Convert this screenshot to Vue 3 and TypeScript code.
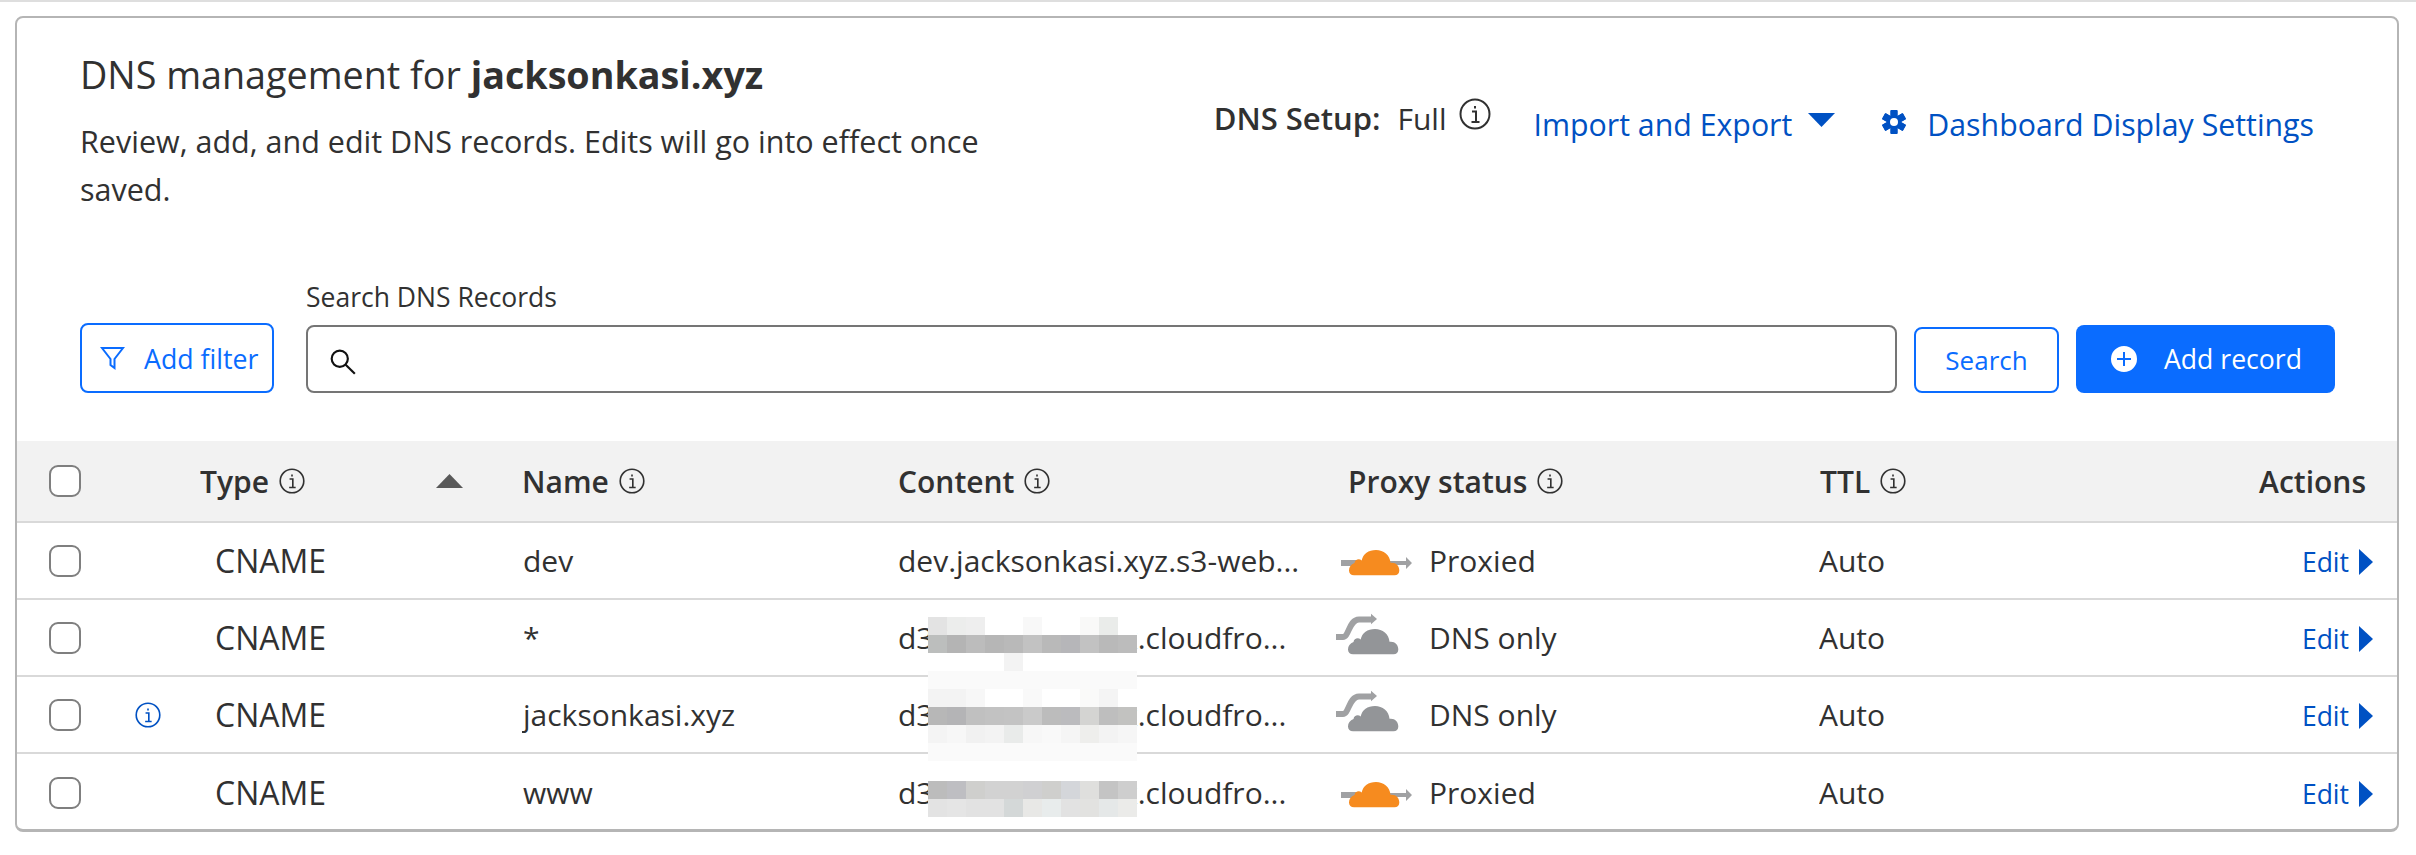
<script setup lang="ts">
interface DnsRecord {
  name: string
  content: string
  proxied: boolean
  warn: boolean
}

const records: DnsRecord[] = [
  { name: 'dev', content: 'dev.jacksonkasi.xyz.s3-web...', proxied: true, warn: false },
  { name: '*', content: 'd3xxxxxxxxxxxxx.cloudfro...', proxied: false, warn: false },
  { name: 'jacksonkasi.xyz', content: 'd3xxxxxxxxxxxxx.cloudfro...', proxied: false, warn: true },
  { name: 'www', content: 'd3xxxxxxxxxxxxx.cloudfro...', proxied: true, warn: false },
]

const columns = [
  { label: 'Type', info: true, sort: true, cls: '' },
  { label: 'Name', info: true, sort: false, cls: '' },
  { label: 'Content', info: true, sort: false, cls: '' },
  { label: 'Proxy status', info: true, sort: false, cls: 'th-proxy' },
  { label: 'TTL', info: true, sort: false, cls: 'th-ttl' },
]

const w = 'ffffff'
const fa = 'fafafa'
const mosaicA: string[][] = [
  ['e3e3e3', 'ecedec', 'eeeeee', w, w, 'f8f8f8', w, w, 'f9f9f8', 'eaecea', w],
  ['bcbebd', 'b4b4b4', 'bcbcbc', 'b6b6b6', 'b9b9b9', 'c2c2c2', 'b9b9b9', 'b6b6b9', 'c2c2c2', 'b9b9b9', 'bcbcbc'],
  [w, w, w, w, 'f3f3f3', w, w, w, w, w, w],
  [fa, fa, fa, fa, fa, fa, fa, fa, fa, fa, fa],
  ['f3f3f3', 'f3f3f3', 'f7f7f7', w, w, 'f9f9f9', w, w, 'fafaf9', 'f4f4f4', w],
  ['b7b7b7', 'b4b4b6', 'c0c0c0', 'c2c2c2', 'c3c3c3', 'cacaca', 'bcbcbc', 'bbbbbe', 'd4d4d2', 'bebebe', 'c2c2c0'],
  ['f4f4f4', 'f7f7f7', 'f1f1f1', 'f3f3f3', 'e9ebea', 'f7f7f7', 'f9f9f9', 'f5f5f5', 'eeeeec', 'f3f3f3', 'f6f6f6'],
  [fa, fa, fa, fa, fa, fa, fa, fa, fa, fa, fa],
]
const mosaicB: string[][] = [
  ['bcbcbc', 'bebec2', 'cfcfcd', 'd2d2d2', 'd2d2d2', 'd0d0d2', 'cfcfcd', 'd4d6da', 'dfdfdd', 'c4c4c4', 'cecece'],
  ['e3e3e3', 'e5e5e5', 'e2e2e2', 'e2e2e2', 'd4d8d8', 'e8e8e6', 'e8ecec', 'e2e2e2', 'e2e2e0', 'e5e8e8', 'ebebe9'],
]
const cloud =
  'M20 39.3H60.5C63.5 39.3 65.3 37.5 65.3 34.5C65.3 29.5 61.5 26 56.5 26.8C56 19 49.5 14 42 14C34.5 14 29 18 27.7 24.5C25.5 22.5 21 23 20.5 27C17 28.5 15 31 15 34.5C15 37.5 17 39.3 20 39.3Z'
const teeth = [0, 60, 120, 180, 240, 300]
</script>

<template>
  <div class="page">
    <section class="card">
      <header class="head">
        <div class="intro">
          <h1 class="title">DNS management for <strong>jacksonkasi.xyz</strong></h1>
          <p class="desc">Review, add, and edit DNS records. Edits will go into effect once saved.</p>
        </div>
        <div class="tools">
          <div class="setup">
            <b>DNS Setup:</b>
            <span class="full">Full</span>
            <svg class="info lg" viewBox="0 0 32 32" aria-hidden="true">
              <circle cx="16" cy="16" r="14.5" />
              <path d="M13 13.5h4v10M12.5 24h8M16 8v2.5" />
            </svg>
          </div>
          <a class="link import">Import and Export
            <svg class="caret" viewBox="0 0 27 14" aria-hidden="true"><path d="M0 0H27L13.5 14Z" /></svg>
          </a>
          <a class="link settings">
            <svg class="gear" viewBox="0 0 24 24" aria-hidden="true">
              <rect v-for="t in teeth" :key="t" x="8.5" y="0" width="7" height="24" rx="1" :transform="`rotate(${t} 12 12)`" />
              <circle class="gear-hole" cx="12" cy="12" r="4" />
            </svg>
            Dashboard Display Settings
          </a>
        </div>
      </header>

      <div class="searchbar">
        <button class="btn filter" type="button">
          <svg class="funnel" viewBox="0 0 24 24" aria-hidden="true"><path d="M1.5 2H22.5L14 13V22L10 19V13Z" /></svg>
          Add filter
        </button>
        <label class="field">
          <span class="field-label">Search DNS Records</span>
          <span class="input">
            <svg class="lens" viewBox="0 0 26 26" aria-hidden="true"><circle cx="10" cy="10" r="7.5" /><path d="M15.5 15.5L24 24" /></svg>
          </span>
        </label>
        <button class="btn search" type="button">Search</button>
        <button class="btn add" type="button">
          <svg class="plus" viewBox="0 0 28 28" aria-hidden="true"><circle cx="14" cy="14" r="14" /><path d="M14 7V21M7 14H21" /></svg>
          Add record
        </button>
      </div>

      <div class="table-wrap">
        <table class="table">
          <colgroup>
            <col class="c-check" /><col class="c-warn" /><col class="c-type" /><col class="c-name" />
            <col class="c-content" /><col class="c-proxy" /><col class="c-ttl" /><col class="c-actions" />
          </colgroup>
          <thead>
            <tr>
              <th><span class="box"></span></th>
              <th></th>
              <th v-for="c in columns" :key="c.label" :class="c.cls">
                <span class="th-in">
                  {{ c.label }}
                  <svg class="info" viewBox="0 0 32 32" aria-hidden="true">
                    <circle cx="16" cy="16" r="14.5" />
                    <path d="M13 13.5h4v10M12.5 24h8M16 8v2.5" />
                  </svg>
                  <svg v-if="c.sort" class="sort" viewBox="0 0 27 14" aria-hidden="true"><path d="M13.5 0L27 14H0Z" /></svg>
                </span>
              </th>
              <th class="right">Actions</th>
            </tr>
          </thead>
          <tbody>
            <tr v-for="r in records" :key="r.name">
              <td><span class="box"></span></td>
              <td>
                <svg v-if="r.warn" class="info warn" viewBox="0 0 32 32" aria-hidden="true">
                  <circle cx="16" cy="16" r="14.5" />
                  <path d="M13 13.5h4v10M12.5 24h8M16 8v2.5" />
                </svg>
              </td>
              <td class="t-type">CNAME</td>
              <td class="t-name">{{ r.name }}</td>
              <td class="t-content">{{ r.content }}</td>
              <td>
                <span class="status">
                  <svg class="proxy" viewBox="0 0 84 50" aria-hidden="true">
                    <template v-if="r.proxied">
                      <path class="arrow-fill" d="M7 24H22V30H7ZM52 25H72V21L78 27L72 33V29H52Z" />
                      <path class="cloud-on" :d="cloud" />
                    </template>
                    <template v-else>
                      <path class="arrow-line" d="M2 24H9C15 24 15 6.5 25 6.5H38" />
                      <path class="arrow-fill" d="M37 0.7L43 6L37 11.3Z" />
                      <path class="cloud-off" :d="cloud" transform="translate(-1 2)" />
                    </template>
                  </svg>
                  {{ r.proxied ? 'Proxied' : 'DNS only' }}
                </span>
              </td>
              <td class="t-ttl">Auto</td>
              <td class="right">
                <a class="edit">Edit
                  <svg class="edit-caret" viewBox="0 0 14 26" aria-hidden="true"><path d="M0 0L14 13L0 26Z" /></svg>
                </a>
              </td>
            </tr>
          </tbody>
        </table>
        <div class="mosaic m-a" aria-hidden="true">
          <template v-for="(row, i) in mosaicA" :key="i">
            <i v-for="(cell, j) in row" :key="j" :style="{ background: '#' + cell }"></i>
          </template>
        </div>
        <div class="mosaic m-b" aria-hidden="true">
          <template v-for="(row, i) in mosaicB" :key="i">
            <i v-for="(cell, j) in row" :key="j" :style="{ background: '#' + cell }"></i>
          </template>
        </div>
      </div>
    </section>
  </div>
</template>

<style scoped>
.page {
  box-sizing: border-box;
  height: 855px;
  border-top: 2px solid #dedede;
  padding: 14px 17px 0 15px;
  background: #fff;
  color: #313131;
  font-family: "Open Sans", "Noto Sans", sans-serif;
  font-size: 30px;
  overflow: hidden;
}
.card {
  box-sizing: border-box;
  height: 816px;
  border: 2px solid #b5b5b5;
  border-bottom-width: 3px;
  border-radius: 8px;
  overflow: hidden;
}
.head {
  display: flex;
  justify-content: space-between;
  align-items: flex-start;
  height: 299px;
}
.intro {
  width: 980px;
  padding: 33px 0 0 63px;
}
.title {
  margin: 0;
  font-size: 37.7px;
  font-weight: 400;
  line-height: 48px;
}
.title strong { font-weight: 700; }
.desc {
  margin: 18px 0 0;
  width: 915px;
  font-size: 30.5px;
  line-height: 48px;
}
.tools {
  display: flex;
  align-items: flex-start;
  padding: 78px 83px 0 0;
}
.setup {
  display: flex;
  align-items: center;
  height: 40px;
  margin-top: 2px;
}
.setup b { font-weight: 600; font-size: 31px; }
.full { margin-left: 17px; }
.setup .lg { margin: -8px 0 0 12px; }
.link {
  display: flex;
  align-items: center;
  color: #0051c3;
  height: 40px;
  margin-top: 8px;
  white-space: nowrap;
  font-size: 30.3px;
}
.import { margin-left: 43px; }
.caret { width: 27px; height: 14px; margin: -8px 0 0 16px; fill: #0051c3; }
.settings { margin-left: 47px; }
.gear { width: 24px; height: 24px; margin: -4px 21px 0 0; fill: #0051c3; }
.gear-hole { fill: #fff; }
.searchbar {
  display: flex;
  align-items: flex-end;
  padding: 0 62px 0 63px;
  height: 76px;
}
.btn {
  box-sizing: border-box;
  display: flex;
  align-items: center;
  font: inherit;
  border-radius: 8px;
  border: 2px solid #0a6cff;
  background: #fff;
  color: #0a6cff;
  white-space: nowrap;
}
.filter {
  width: 194px;
  height: 70px;
  padding: 0 0 0 18px;
  font-size: 26.7px;
}
.funnel { width: 25px; height: 24px; margin-right: 19px; fill: none; stroke: #0a6cff; stroke-width: 2; }
.field { display: flex; flex-direction: column; margin-left: 32px; flex: 1; }
.field-label { font-size: 26.5px; line-height: 34px; margin-bottom: 11px; }
.input {
  box-sizing: border-box;
  display: flex;
  align-items: center;
  height: 68px;
  border: 2px solid #757575;
  border-radius: 8px;
  padding-left: 21px;
}
.lens { width: 28px; height: 28px; margin-top: 5px; fill: none; stroke: #111; stroke-width: 2; }
.search {
  justify-content: center;
  width: 145px;
  height: 66px;
  margin: 0 0 0 17px;
  padding: 0;
  font-size: 26px;
}
.add {
  width: 259px;
  height: 68px;
  margin: 0 0 0 17px;
  padding: 0 0 0 34px;
  background: #0a6cff;
  color: #fff;
  font-size: 26.6px;
  border: 0;
}
.plus { width: 28px; height: 28px; margin-right: 26px; fill: #fff; stroke: #0a6cff; stroke-width: 2; }
.table-wrap {
  position: relative;
  margin-top: 48px;
}
.table {
  width: 100%;
  table-layout: fixed;
  border-collapse: separate;
  border-spacing: 0;
}
.c-check { width: 118px; }
.c-warn { width: 65px; }
.c-type { width: 322px; }
.c-name { width: 376px; }
.c-content { width: 436px; }
.c-proxy { width: 485px; }
.c-ttl { width: 431px; }
th, td {
  padding: 0;
  text-align: left;
  border-bottom: 2px solid #d9d9d9;
  white-space: nowrap;
  overflow: hidden;
}
thead tr { height: 82px; }
tbody tr { height: 77px; }
th {
  background: #f2f2f2;
  font-weight: 600;
  font-size: 30px;
}
th:first-child, td:first-child { padding-left: 32px; }
tbody tr:last-child td { border-bottom: 0; }
.box {
  box-sizing: border-box;
  display: block;
  width: 32px;
  height: 32px;
  border: 2px solid #7f7f7f;
  border-radius: 9px;
  background: #fff;
}
.th-in { display: flex; align-items: center; }
.th-proxy { padding-left: 14px; }
.th-ttl { padding-left: 1px; }
.info {
  width: 26px;
  height: 26px;
  margin-left: 10px;
  fill: none;
  stroke: #313131;
  stroke-width: 2;
  flex: none;
}
.lg { width: 32px; height: 32px; }
.warn { display: block; margin: 0; stroke: #0051c3; }
.sort { width: 27px; height: 14px; margin-left: 131px; fill: #595959; }
.t-type { padding-left: 15px; font-size: 32px; }
.t-name { padding-left: 1px; }
.t-content { padding-left: 0; }
.status { display: flex; align-items: center; }
.proxy { width: 84px; height: 50px; margin-right: 11px; flex: none; }
.cloud-on { fill: #f68b1f; }
.cloud-off { fill: #939598; }
.arrow-fill { fill: #a0a1a3; }
.arrow-line { fill: none; stroke: #a0a1a3; stroke-width: 6; }
.t-ttl { padding-left: 0; }
.right { text-align: right; padding-right: 31px; }
td.right { padding-right: 24px; }
.edit {
  display: inline-flex;
  align-items: center;
  color: #0051c3;
  font-size: 26.5px;
}
.edit-caret { width: 14px; height: 26px; margin-left: 10px; fill: #0051c3; }
.mosaic {
  position: absolute;
  left: 911px;
  display: grid;
  grid-template-columns: repeat(11, 19px);
  grid-auto-rows: 18px;
}
.m-a { top: 176px; }
.m-b { top: 340px; }
</style>

<style>
html, body { margin: 0; background: #fff; }
</style>
